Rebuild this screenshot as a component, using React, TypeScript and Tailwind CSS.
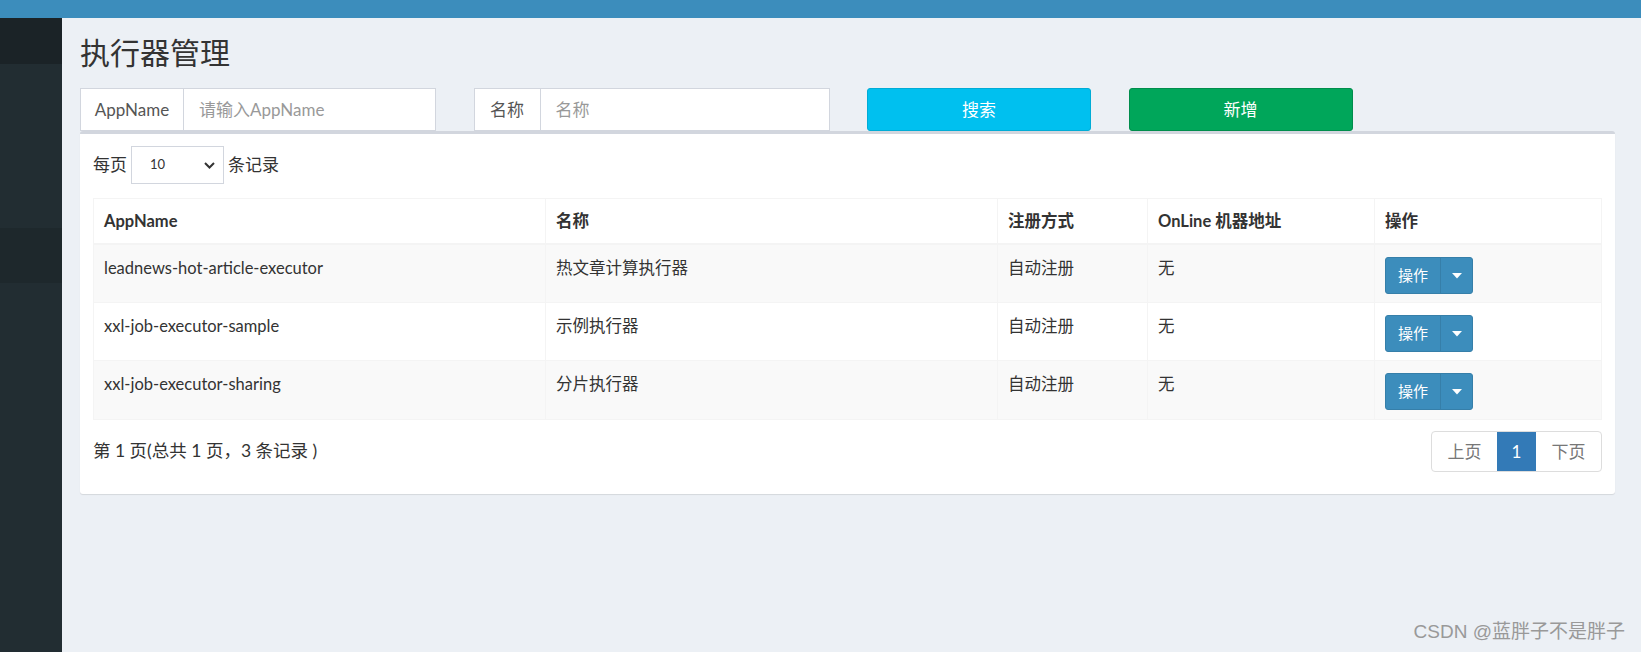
import React from "react";

const rows = [
  ["leadnews-hot-article-executor", "热文章计算执行器"],
  ["xxl-job-executor-sample", "示例执行器"],
  ["xxl-job-executor-sharing", "分片执行器"],
];

function OpButton() {
  return (
    <div className="flex h-[37px] w-[88px] rounded-[3px] border border-[#367fa9] bg-[#3c8dbc] text-white">
      <div className="flex w-[55px] items-center justify-center border-r border-[#367fa9] text-[15px]">操作</div>
      <div className="flex flex-1 items-center justify-center">
        <svg width="10" height="6" viewBox="0 0 10 6"><path d="M0 0h10L5 5.5z" fill="#fff" /></svg>
      </div>
    </div>
  );
}

export default function App() {
  return (
    <div className="relative flex h-[652px] w-[1641px] overflow-hidden font-['Lato','Noto_Sans_CJK_SC',sans-serif] text-[#333]">
      <aside className="flex w-[62px] shrink-0 flex-col bg-[#222d32]">
        <div className="h-[18px] bg-[#3c8dbc]" />
        <div className="h-[46px] bg-[#1b2327]" />
        <div className="h-[164px] bg-[#222d32]" />
        <div className="h-[55px] bg-[#1e282c]" />
        <div className="flex-1 bg-[#222d32]" />
      </aside>
      <main className="flex flex-1 flex-col bg-[#ecf0f5]">
        <div className="h-[18px] bg-[#3c8dbc]" />
        <div className="pl-[18px] pr-[26px] pt-[16px]">
          <h1 className="h-[37px] text-[30px] leading-[36px]">执行器管理</h1>
          <div className="mt-[17px] flex h-[43px] gap-[37.5px] text-[17px]">
            <div className="flex w-[356px] border border-[#d2d6de] bg-white">
              <div className="flex w-[103px] items-center justify-center border-r border-[#d2d6de] text-[#555]">AppName</div>
              <div className="flex flex-1 items-center pl-[15px] text-[#999]">请输入AppName</div>
            </div>
            <div className="flex w-[356px] border border-[#d2d6de] bg-white">
              <div className="flex w-[66px] items-center justify-center border-r border-[#d2d6de] text-[#555]">名称</div>
              <div className="flex flex-1 items-center pl-[15px] text-[#999]">名称</div>
            </div>
            <div className="flex w-[224px] items-center justify-center rounded-[3px] border border-[#00acd6] bg-[#00c0ef] text-white">搜索</div>
            <div className="flex w-[224px] items-center justify-center rounded-[3px] border border-[#008d4c] bg-[#00a65a] text-white">新增</div>
          </div>
          <div className="rounded-[3px] border-t-[3px] border-[#d2d6de] bg-white px-[13px] pb-[22px] pt-[12px] shadow-[0_1px_1px_rgba(0,0,0,0.1)]">
            <div className="flex h-[38px] items-center text-[17px]">
              <span>每页</span>
              <div className="mx-[4px] flex h-[38px] w-[93px] items-center justify-between border border-[#d2d6de] pl-[18px] pr-[8px] text-[13px]">
                <span>10</span>
                <svg width="11" height="7" viewBox="0 0 11 7"><path d="M1 1l4.5 4.5L10 1" fill="none" stroke="#333" strokeWidth="2" /></svg>
              </div>
              <span>条记录</span>
            </div>
            <div className="mt-[14px] border border-[#f4f4f4] text-[16.5px]">
              <div className="grid h-[46px] grid-cols-[452px_452px_150px_227px_1fr] border-b-2 border-[#f4f4f4] font-bold">
                <div className="flex items-center border-r border-[#f4f4f4] px-[10px]">AppName</div>
                <div className="flex items-center border-r border-[#f4f4f4] px-[10px]">名称</div>
                <div className="flex items-center border-r border-[#f4f4f4] px-[10px]">注册方式</div>
                <div className="flex items-center border-r border-[#f4f4f4] px-[10px]">OnLine 机器地址</div>
                <div className="flex items-center px-[10px]">操作</div>
              </div>
              {rows.map((r, i) => (
                <div
                  key={i}
                  className={`grid h-[58px] grid-cols-[452px_452px_150px_227px_1fr] ${i < 2 ? "border-b border-[#f4f4f4]" : ""} ${i % 2 === 0 ? "bg-[#f9f9f9]" : "bg-white"}`}
                >
                  <div className="border-r border-[#f4f4f4] px-[10px] pt-[11px] leading-[25px]">{r[0]}</div>
                  <div className="border-r border-[#f4f4f4] px-[10px] pt-[11px] leading-[25px]">{r[1]}</div>
                  <div className="border-r border-[#f4f4f4] px-[10px] pt-[11px] leading-[25px]">自动注册</div>
                  <div className="border-r border-[#f4f4f4] px-[10px] pt-[11px] leading-[25px]">无</div>
                  <div className="px-[10px] pt-[12px]">
                    <OpButton />
                  </div>
                </div>
              ))}
            </div>
            <div className="mt-[11px] flex items-center justify-between">
              <div className="text-[17.5px]">第 1 页(总共 1 页，3 条记录 )</div>
              <div className="flex h-[41px] overflow-hidden rounded-[4px] border border-[#ddd] text-[17px]">
                <div className="flex w-[65px] items-center justify-center text-[#777]">上页</div>
                <div className="flex w-[39px] items-center justify-center bg-[#337ab7] text-white">1</div>
                <div className="flex w-[65px] items-center justify-center text-[#777]">下页</div>
              </div>
            </div>
          </div>
        </div>
      </main>
      <div className="absolute bottom-[6px] right-[16px] font-['Liberation_Sans','Noto_Sans_CJK_SC',sans-serif] text-[19px] text-[#999]">
        CSDN @蓝胖子不是胖子
      </div>
    </div>
  );
}
